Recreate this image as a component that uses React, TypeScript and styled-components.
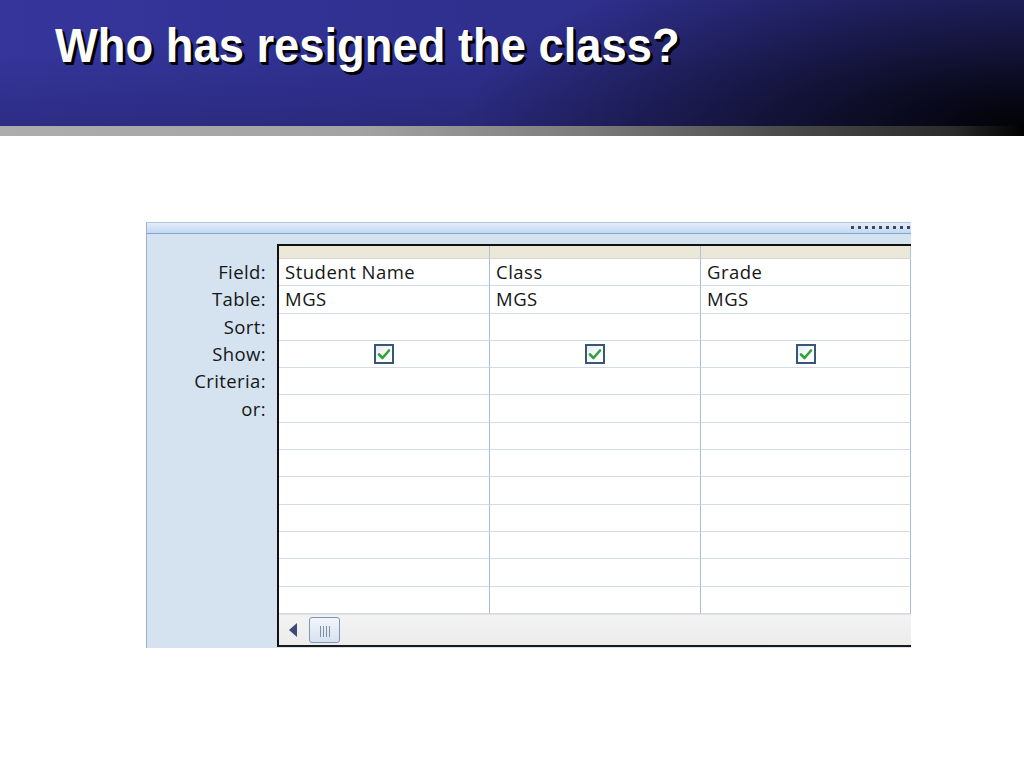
import React from "react";
import styled, { createGlobalStyle } from "styled-components";

const GlobalStyle = createGlobalStyle`
  html, body {
    margin: 0;
    padding: 0;
    background: #ffffff;
  }
  body {
    width: 1024px;
    height: 768px;
    overflow: hidden;
  }
`;

const Slide = styled.div`
  width: 1024px;
  height: 768px;
  display: flex;
  flex-direction: column;
  background: #ffffff;
`;

const Header = styled.header`
  height: 126px;
  padding: 17px 0 0 55px;
  box-sizing: border-box;
  background:
    radial-gradient(ellipse 55% 150% at 100% 100%, rgba(0, 0, 0, 0.95) 0%, rgba(0, 0, 0, 0) 100%),
    linear-gradient(to bottom, rgba(0, 0, 0, 0) 40%, rgba(0, 0, 0, 0.15) 100%),
    linear-gradient(to right, #35359c 0%, #2f2f8e 50%, #2b2b80 100%);
`;

const Title = styled.h1`
  margin: 0;
  font-family: "Liberation Sans", Arial, sans-serif;
  font-weight: bold;
  font-size: 49px;
  line-height: 56px;
  color: #ffffff;
  text-shadow: 3px 3px 0 #000000, 2px 2px 0 #000000;
  transform: scaleX(0.925);
  transform-origin: left center;
  white-space: nowrap;
`;

const GrayBar = styled.div`
  height: 10px;
  background: linear-gradient(
    to right,
    #adadad 0%,
    #a3a3a3 35%,
    #7a7a7a 58%,
    #474747 78%,
    #2b2b2b 93%,
    #000000 100%
  );
`;

const Content = styled.main`
  flex: 1;
  padding: 86px 0 0 146px;
`;

const QueryPanel = styled.section`
  width: 765px;
  height: 426px;
  display: flex;
  flex-direction: column;
  border-left: 1px solid #9fb3cb;
  background: #d5e3f1;
  box-sizing: border-box;
  font-family: "Open Sans", "Noto Sans", sans-serif;
  font-size: 18.5px;
  color: #161616;
`;

const TopBar = styled.div`
  height: 12px;
  display: flex;
  justify-content: flex-end;
  align-items: flex-start;
  padding: 3px 1px 0 0;
  box-sizing: border-box;
  border-top: 1px solid #afc6e2;
  border-bottom: 1px solid #7fa3d2;
  background: linear-gradient(to bottom, #e3edf9 0%, #c3d8f1 100%);
`;

const Grip = styled.div`
  display: flex;
  gap: 4px;
`;

const GripDot = styled.span`
  width: 3px;
  height: 3px;
  background: #3f4858;
`;

const Body = styled.div`
  flex: 1;
  display: flex;
  padding-top: 10px;
  min-height: 0;
`;

const Labels = styled.div`
  width: 130px;
  padding-top: 14px;
  box-sizing: border-box;
  display: grid;
  grid-auto-rows: 27.3px;
  align-content: start;
`;

const Label = styled.div`
  display: flex;
  align-items: center;
  justify-content: flex-end;
  padding-right: 11px;
  letter-spacing: 0.4px;
`;

const Grid = styled.div`
  flex: 1;
  display: flex;
  flex-direction: column;
  border-left: 2px solid #111111;
  border-top: 2px solid #111111;
  border-bottom: 2px solid #1a1a1a;
  background: #ffffff;
  margin-bottom: 1px;
`;

const ColumnHeads = styled.div`
  height: 13px;
  display: grid;
  grid-template-columns: 211px 211px 210px;
  background: #ebe8da;
`;

const ColumnHead = styled.div`
  border-right: 1px solid #b3c3d6;
  border-bottom: 1px solid #d4d6d2;
`;

const Rows = styled.div`
  display: grid;
  grid-template-columns: 211px 211px 210px;
  grid-auto-rows: 27.3px;
`;

const Cell = styled.div<{ $center?: boolean }>`
  display: flex;
  align-items: center;
  justify-content: ${({ $center }) => ($center ? "center" : "flex-start")};
  padding-left: ${({ $center }) => ($center ? "0" : "6px")};
  padding-bottom: 1px;
  border-right: 1px solid #a9bcd3;
  border-bottom: 1px solid #d3dbe5;
  box-sizing: border-box;
  letter-spacing: 0.5px;
  white-space: nowrap;
`;

const CheckBox = styled.span`
  width: 20px;
  height: 20px;
  box-sizing: border-box;
  border: 2px solid #3a5676;
  background: linear-gradient(135deg, #e6ecf2 0%, #ffffff 70%);
  display: flex;
  align-items: center;
  justify-content: center;
`;

const ScrollBar = styled.div`
  flex: 1;
  display: flex;
  align-items: center;
  gap: 12px;
  padding-left: 10px;
  background: linear-gradient(to bottom, #f3f3f3 0%, #ececec 100%);
  border-top: 1px solid #e2e2e2;
`;

const Arrow = styled.span`
  width: 0;
  height: 0;
  border-top: 7px solid transparent;
  border-bottom: 7px solid transparent;
  border-right: 8px solid #3f4a78;
`;

const Thumb = styled.span`
  width: 31px;
  height: 26px;
  box-sizing: border-box;
  border: 1px solid #8196b4;
  border-radius: 3px;
  background: linear-gradient(to bottom, #f2f6fb 0%, #d6e2f0 100%);
  display: flex;
  align-items: center;
  justify-content: center;
  gap: 2px;
  padding-top: 4px;
`;

const GripLine = styled.span`
  width: 1px;
  height: 11px;
  background: #7d8ea6;
`;

const Check = () => (
  <svg width="14" height="12" viewBox="0 0 14 12">
    <path d="M2 6.5 L5.5 10 L12 2.5" fill="none" stroke="#2fa33a" strokeWidth="2.6" strokeLinecap="round" strokeLinejoin="round" />
  </svg>
);

const labels = ["Field:", "Table:", "Sort:", "Show:", "Criteria:", "or:"];

const columns = [
  { field: "Student Name", table: "MGS" },
  { field: "Class", table: "MGS" },
  { field: "Grade", table: "MGS" },
];

const EMPTY_ROWS = 9;

export default function App() {
  return (
    <>
      <GlobalStyle />
      <Slide>
        <Header>
          <Title>Who has resigned the class?</Title>
        </Header>
        <GrayBar />
        <Content>
          <QueryPanel>
            <TopBar>
              <Grip>
                {Array.from({ length: 9 }).map((_, i) => (
                  <GripDot key={i} />
                ))}
              </Grip>
            </TopBar>
            <Body>
              <Labels>
                {labels.map((l) => (
                  <Label key={l}>{l}</Label>
                ))}
              </Labels>
              <Grid>
                <ColumnHeads>
                  {columns.map((c) => (
                    <ColumnHead key={c.field} />
                  ))}
                </ColumnHeads>
                <Rows>
                  {columns.map((c) => (
                    <Cell key={"f" + c.field}>{c.field}</Cell>
                  ))}
                  {columns.map((c) => (
                    <Cell key={"t" + c.field}>{c.table}</Cell>
                  ))}
                  {columns.map((c) => (
                    <Cell key={"s" + c.field} />
                  ))}
                  {columns.map((c) => (
                    <Cell key={"c" + c.field} $center>
                      <CheckBox>
                        <Check />
                      </CheckBox>
                    </Cell>
                  ))}
                  {Array.from({ length: EMPTY_ROWS * columns.length }).map((_, i) => (
                    <Cell key={"e" + i} />
                  ))}
                </Rows>
                <ScrollBar>
                  <Arrow />
                  <Thumb>
                    <GripLine />
                    <GripLine />
                    <GripLine />
                    <GripLine />
                  </Thumb>
                </ScrollBar>
              </Grid>
            </Body>
          </QueryPanel>
        </Content>
      </Slide>
    </>
  );
}
